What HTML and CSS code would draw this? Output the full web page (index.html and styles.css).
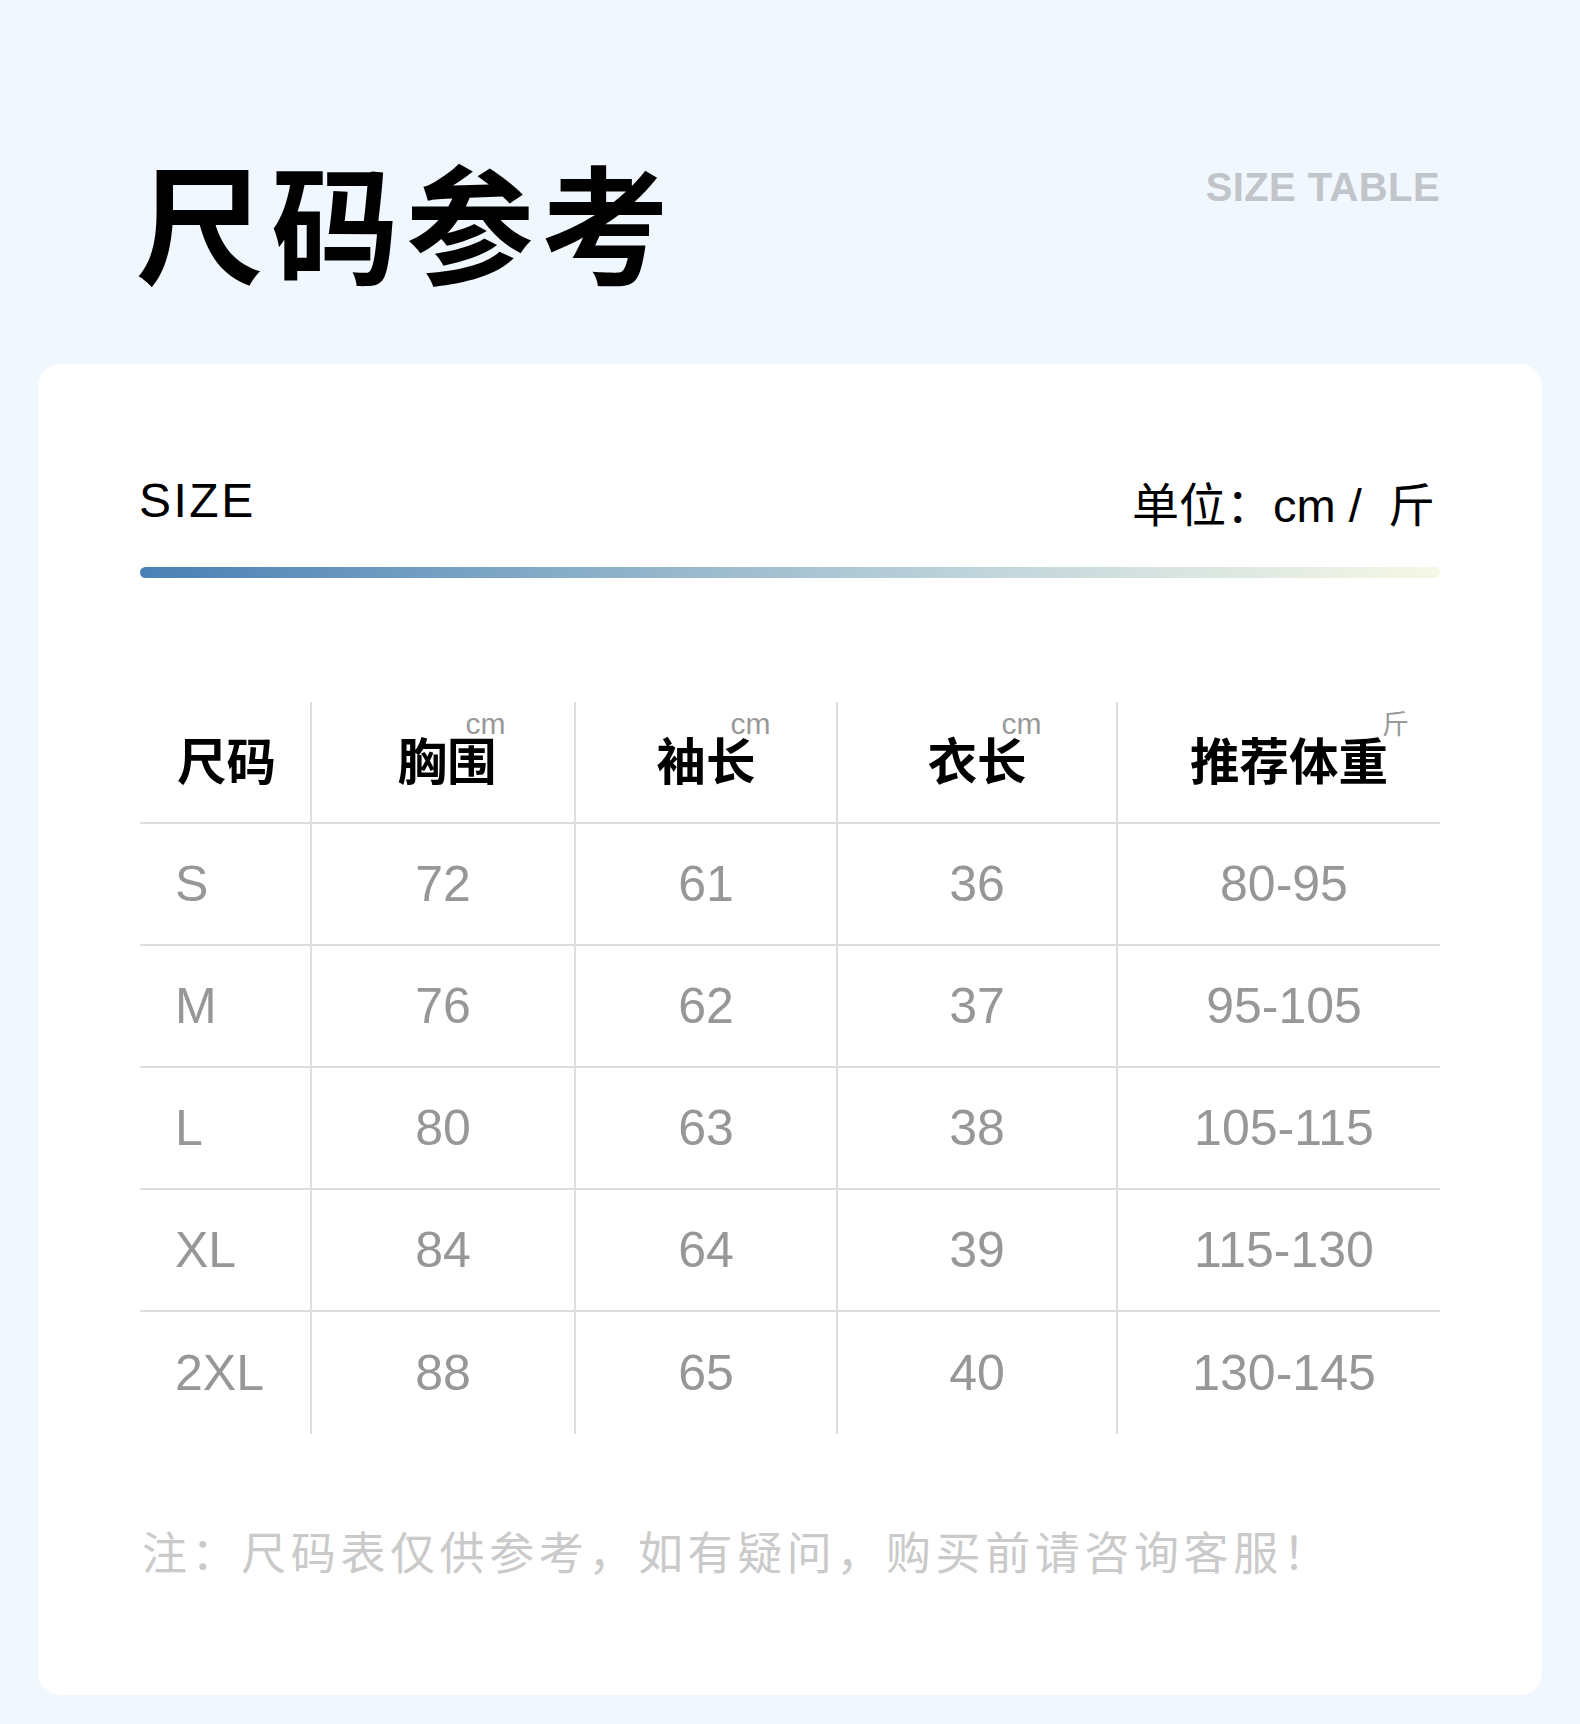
FILE: index.html
```html
<!DOCTYPE html>
<html lang="zh-CN">
<head>
<meta charset="utf-8">
<title>尺码参考</title>
<link rel="stylesheet" href="styles.css">
</head>
<body>
<div class="page">
  <header class="top">
    <h1 class="title">尺码参考</h1>
    <div class="en">SIZE TABLE</div>
  </header>
  <section class="card">
    <div class="card-head">
      <div class="size">SIZE</div>
      <div class="unit">单位：cm /  斤</div>
    </div>
    <div class="bar"></div>
    <div class="grid">
      <div class="cell h c1"><span class="label">尺码</span></div>
      <div class="cell h c2"><span class="label">胸围<span class="sup sup-cm">cm</span></span></div>
      <div class="cell h"><span class="label">袖长<span class="sup sup-cm">cm</span></span></div>
      <div class="cell h"><span class="label">衣长<span class="sup sup-cm">cm</span></span></div>
      <div class="cell h c5"><span class="label">推荐体重<span class="sup sup-jin">斤</span></span></div>

      <div class="cell d c1">S</div>
      <div class="cell d">72</div>
      <div class="cell d">61</div>
      <div class="cell d">36</div>
      <div class="cell d c5">80-95</div>

      <div class="cell d c1">M</div>
      <div class="cell d">76</div>
      <div class="cell d">62</div>
      <div class="cell d">37</div>
      <div class="cell d c5">95-105</div>

      <div class="cell d c1">L</div>
      <div class="cell d">80</div>
      <div class="cell d">63</div>
      <div class="cell d">38</div>
      <div class="cell d c5">105-115</div>

      <div class="cell d c1">XL</div>
      <div class="cell d">84</div>
      <div class="cell d">64</div>
      <div class="cell d">39</div>
      <div class="cell d c5">115-130</div>

      <div class="cell d c1 last">2XL</div>
      <div class="cell d last">88</div>
      <div class="cell d last">65</div>
      <div class="cell d last">40</div>
      <div class="cell d c5 last">130-145</div>
    </div>
    <p class="note">注：尺码表仅供参考，如有疑问，购买前请咨询客服！</p>
  </section>
</div>
</body>
</html>
```

FILE: styles.css
```css
html, body {
  margin: 0;
  padding: 0;
}
body {
  background: #f0f7fe;
  min-height: 1724px;
  font-family: "Liberation Sans", "Noto Sans CJK SC", sans-serif;
}
.page {
  width: 1580px;
}
.top {
  display: flex;
  justify-content: space-between;
  align-items: flex-start;
  padding: 156px 140px 0 136px;
}
.title {
  margin: 0;
  font-family: "Noto Sans CJK SC", sans-serif;
  font-weight: 700;
  font-size: 128px;
  line-height: 1;
  letter-spacing: 7px;
  color: #000;
}
.en {
  margin-top: 11px;
  font-family: "Liberation Sans", sans-serif;
  font-weight: 700;
  font-size: 40px;
  line-height: 1;
  letter-spacing: 0.4px;
  color: #c1c4c8;
}
.card {
  margin: 80px 38px 0;
  background: #fff;
  border-radius: 22px;
  padding: 113px 102px 122px;
}
.card-head {
  display: flex;
  justify-content: space-between;
  align-items: flex-start;
}
.size {
  font-family: "Liberation Sans", sans-serif;
  font-size: 48px;
  line-height: 1;
  letter-spacing: 2.5px;
  color: #000;
  margin-left: -1px;
}
.unit {
  margin-top: 5px;
  margin-right: 5px;
  font-family: "Liberation Sans", "Noto Sans CJK SC", sans-serif;
  font-size: 47px;
  line-height: 1;
  color: #000;
  white-space: pre;
}
.bar {
  margin-top: 38px;
  height: 11px;
  border-radius: 6px;
  background: linear-gradient(90deg, #4a80b5 0%, #8db1c9 36%, #c3d6dc 66%, #f6f8e6 100%);
}
.grid {
  margin-top: 124px;
  display: grid;
  grid-template-columns: 172px 264px 262px 280px 1fr;
}
.cell {
  box-sizing: border-box;
  height: 122px;
  display: flex;
  align-items: center;
  justify-content: center;
  border-right: 2px solid #dedede;
  border-bottom: 2px solid #dedede;
}
.cell.c5 {
  border-right: none;
  padding-left: 10px;
}
.cell.last {
  border-bottom: none;
}
.cell.c1 {
  justify-content: flex-start;
  padding-left: 35px;
}
.cell.h {
  padding-bottom: 6px;
}
.cell.h.c1 {
  padding-left: 37px;
}
.cell.h.c2 {
  padding-left: 8px;
}
.cell.h.c5 {
  padding-left: 20px;
}
.label {
  position: relative;
  font-family: "Noto Sans CJK SC", sans-serif;
  font-weight: 700;
  font-size: 49.5px;
  line-height: 1;
  color: #000;
}
.sup {
  position: absolute;
  top: -25px;
  line-height: 1;
  font-weight: 400;
  color: #999;
  white-space: nowrap;
}
.sup-cm {
  left: calc(100% - 25px);
  font-family: "Liberation Sans", sans-serif;
  font-size: 30px;
}
.c2 .sup-cm {
  left: calc(100% - 31px);
}
.sup-jin {
  left: calc(100% - 6px);
  font-family: "Noto Sans CJK SC", sans-serif;
  font-size: 27px;
}
.cell.d {
  font-family: "Liberation Sans", sans-serif;
  font-size: 50px;
  line-height: 1;
  color: #979797;
}
.note {
  margin: 94px 0 0 2px;
  font-family: "Noto Sans CJK SC", sans-serif;
  font-size: 45px;
  line-height: 1;
  letter-spacing: 4.6px;
  color: #cacaca;
  white-space: nowrap;
}
```
